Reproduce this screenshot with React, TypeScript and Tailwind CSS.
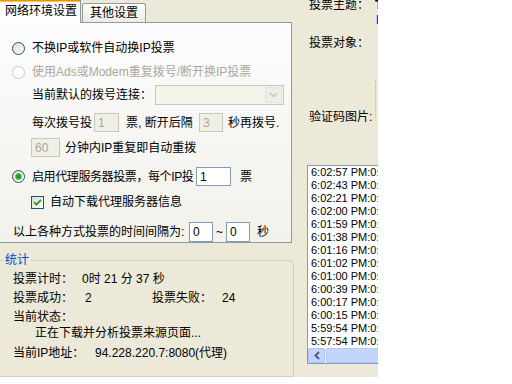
import React from 'react';

const font = "font-['Liberation_Sans','Noto_Sans_CJK_SC',sans-serif]";

function Radio({ checked, disabled }: { checked?: boolean; disabled?: boolean }) {
  return (
    <span
      className={
        disabled
          ? 'w-[13px] h-[13px] rounded-full border border-[#CAC8BB] bg-white shrink-0 flex items-center justify-center'
          : 'w-[13px] h-[13px] rounded-full border border-[#1C5180] bg-linear-to-br from-[#DCDCD7] to-white shrink-0 flex items-center justify-center'
      }
    >
      {checked && <span className="w-[5px] h-[5px] rounded-full bg-[#21A121] ring-1 ring-[#62D35F]" />}
    </span>
  );
}

function Check() {
  return (
    <span className="w-[13px] h-[13px] border border-[#1C5180] bg-linear-to-br from-[#DCDCD7] to-white shrink-0 flex items-center justify-center">
      <svg width="9" height="9" viewBox="0 0 9 9">
        <path d="M1 4.2 L3.4 6.6 L8 1.8" stroke="#21A121" strokeWidth="1.8" fill="none" />
      </svg>
    </span>
  );
}

function Field({ value, disabled, className }: { value: string; disabled?: boolean; className: string }) {
  return (
    <span
      className={
        (disabled
          ? 'border-[#C9C7BA] bg-[#F0EFE6] text-[#ACA899] '
          : 'border-[#7F9DB9] bg-white text-black ') +
        'border flex items-center pl-[3px] shrink-0 text-[12px] leading-none ' +
        className
      }
    >
      {value}
    </span>
  );
}

const logs = [
  '6:02:57 PM:0:0',
  '6:02:43 PM:0:0',
  '6:02:21 PM:0:0',
  '6:02:00 PM:0:0',
  '6:01:59 PM:0:0',
  '6:01:38 PM:0:0',
  '6:01:16 PM:0:0',
  '6:01:02 PM:0:0',
  '6:01:00 PM:0:0',
  '6:00:39 PM:0:0',
  '6:00:17 PM:0:0',
  '6:00:15 PM:0:0',
  '5:59:54 PM:0:0',
  '5:57:54 PM:0:0',
];

export default function App() {
  return (
    <div className={`w-[512px] h-[384px] bg-white overflow-hidden text-[12px] text-black ${font}`}>
      <div className="w-[378px] h-[377px] bg-[#ECE9D8] flex overflow-hidden">
        {/* left side */}
        <div className="w-[300px] shrink-0 flex flex-col">
          <div className="flex items-start h-[22px]">
            <div className="relative z-10 w-[81px] h-[23px] bg-white border-r border-[#919B9C] flex flex-col">
              <div className="h-px bg-[#E68B2C]" />
              <div className="h-[2px] bg-[#FFC73C]" />
              <div className="flex-1 flex items-center pl-[5px] pb-[3px] whitespace-nowrap">网络环境设置</div>
            </div>
            <div className="mt-[3px] ml-px w-[64px] h-[19px] border border-b-0 border-[#919B9C] rounded-t-[3px] bg-linear-to-b from-white to-[#ECEBE6] flex items-center justify-center whitespace-nowrap">
              其他设置
            </div>
          </div>

          <div className="w-[292px] h-[237px] border border-l-0 border-[#919B9C] bg-linear-to-b from-[#FCFCFE] to-[#F2F1EA] flex flex-col whitespace-nowrap">
            <div className="mt-[16px] h-[18px] flex items-center pl-[12px]">
              <Radio />
              <span className="ml-[7px]">不换IP或软件自动换IP投票</span>
            </div>
            <div className="mt-[6px] h-[18px] flex items-center pl-[12px]">
              <Radio disabled />
              <span className="ml-[7px] text-[#ACA899]">使用Ads或Modem重复拨号/断开换IP投票</span>
            </div>
            <div className="mt-[4px] h-[20px] flex items-center pl-[32px]">
              <span className="w-[123px] shrink-0">当前默认的拨号连接：</span>
              <span className="w-[129px] h-[20px] border border-[#C9C7BA] bg-[#F5F4EA] flex items-center justify-end pr-px">
                <span className="w-[17px] h-[16px] bg-[#EEEDE6] border border-[#E3E1D8] rounded-[2px] flex items-center justify-center">
                  <svg width="9" height="6" viewBox="0 0 9 6">
                    <path d="M1 1 L4.5 4.5 L8 1" stroke="#C9C7BA" strokeWidth="1.5" fill="none" />
                  </svg>
                </span>
              </span>
            </div>
            <div className="mt-[8px] h-[19px] flex items-center pl-[32px]">
              <span className="w-[62px] shrink-0">每次拨号投</span>
              <Field value="1" disabled className="w-[25px] h-[19px]" />
              <span className="ml-[7px] w-[73px] shrink-0">票, 断开后隔</span>
              <Field value="3" disabled className="w-[24px] h-[19px]" />
              <span className="ml-[5px]">秒再拨号.</span>
            </div>
            <div className="mt-[6px] h-[19px] flex items-center pl-[31px]">
              <Field value="60" disabled className="w-[29px] h-[19px]" />
              <span className="ml-[5px]">分钟内IP重复即自动重拨</span>
            </div>
            <div className="mt-[10px] h-[19px] flex items-center pl-[12px]">
              <Radio checked />
              <span className="ml-[7px] w-[164px] shrink-0 tracking-[-0.4px]">启用代理服务器投票，每个IP投</span>
              <Field value="1" className="w-[35px] h-[19px]" />
              <span className="ml-[9px]">票</span>
            </div>
            <div className="mt-[9px] h-[14px] flex items-center pl-[31px]">
              <Check />
              <span className="ml-[6px]">自动下载代理服务器信息</span>
            </div>
            <div className="mt-[13px] h-[20px] flex items-center pl-[13px]">
              <span className="w-[176px] shrink-0">以上各种方式投票的时间间隔为:</span>
              <Field value="0" className="w-[24px] h-[20px]" />
              <span className="w-[13px] text-center">~</span>
              <Field value="0" className="w-[24px] h-[20px]" />
              <span className="ml-[7px]">秒</span>
            </div>
          </div>

          <div className="relative mt-[17px] w-[294px] h-[140px] border border-l-0 border-[#D0D0BF] rounded-tr-[5px] flex flex-col whitespace-nowrap">
            <span className="absolute left-[3px] -top-[8px] px-[2px] bg-[#ECE9D8] text-[#0046D5] leading-[14px]">统计</span>
            <div className="mt-[9px] h-[18px] flex items-center pl-[13px]">
              <span className="w-[69px] shrink-0">投票计时：</span>
              <span>0时 21 分 37 秒</span>
            </div>
            <div className="mt-px h-[18px] flex items-center pl-[13px]">
              <span className="w-[72px] shrink-0">投票成功：</span>
              <span className="w-[67px] shrink-0">2</span>
              <span className="w-[70px] shrink-0">投票失败：</span>
              <span>24</span>
            </div>
            <div className="mt-px h-[18px] flex items-center pl-[13px]">当前状态：</div>
            <div className="mt-[-2px] h-[18px] flex items-center pl-[35px]">正在下载并分析投票来源页面...</div>
            <div className="mt-[2px] h-[18px] flex items-center pl-[13px]">
              <span className="w-[82px] shrink-0">当前IP地址：</span>
              <span>94.228.220.7:8080(代理)</span>
            </div>
          </div>
        </div>

        {/* right side */}
        <div className="w-[78px] shrink-0 flex flex-col whitespace-nowrap">
          <div className="-mt-[4px] h-[18px] flex items-center pl-[9px]">
            <span className="w-[66px] shrink-0">投票主题：</span>
            <span className="font-bold">T</span>
          </div>
          <div className="h-[12px] flex items-center pl-[76px] text-[#0000FF] leading-none">http</div>
          <div className="mt-[8px] h-[18px] flex items-center pl-[9px]">投票对象：</div>
          <div className="mt-[28px] h-[46px] flex justify-between">
            <span className="self-end h-[18px] flex items-center pl-[9px]">验证码图片:</span>
            <span className="self-start w-[3px] h-[38px] border-l border-dotted border-[#C8B98C] bg-[#EFE8D2]" />
          </div>
          <div className="mt-[39px] ml-[7px] w-[120px] h-[199px] shrink-0 border border-[#7F9DB9] bg-white flex flex-col">
            <div className="h-[182px] flex flex-col text-[11px] pl-[3px]">
              {logs.map((l) => (
                <div key={l} className="h-[13px] leading-[13px]">{l}</div>
              ))}
            </div>
            <div className="h-[15px] flex bg-[#F4F3EE]">
              <span className="w-[17px] h-[15px] bg-[#C4D4FC] border border-[#B1C4F1] rounded-[2px] flex items-center justify-center">
                <svg width="6" height="9" viewBox="0 0 6 9">
                  <path d="M5 1 L1.5 4.5 L5 8" stroke="#4D6185" strokeWidth="2" fill="none" />
                </svg>
              </span>
              <span className="flex-1 ml-px bg-[#C2D5FC] border border-[#B6CAF6] rounded-[2px]" />
            </div>
          </div>
        </div>
      </div>
    </div>
  );
}
